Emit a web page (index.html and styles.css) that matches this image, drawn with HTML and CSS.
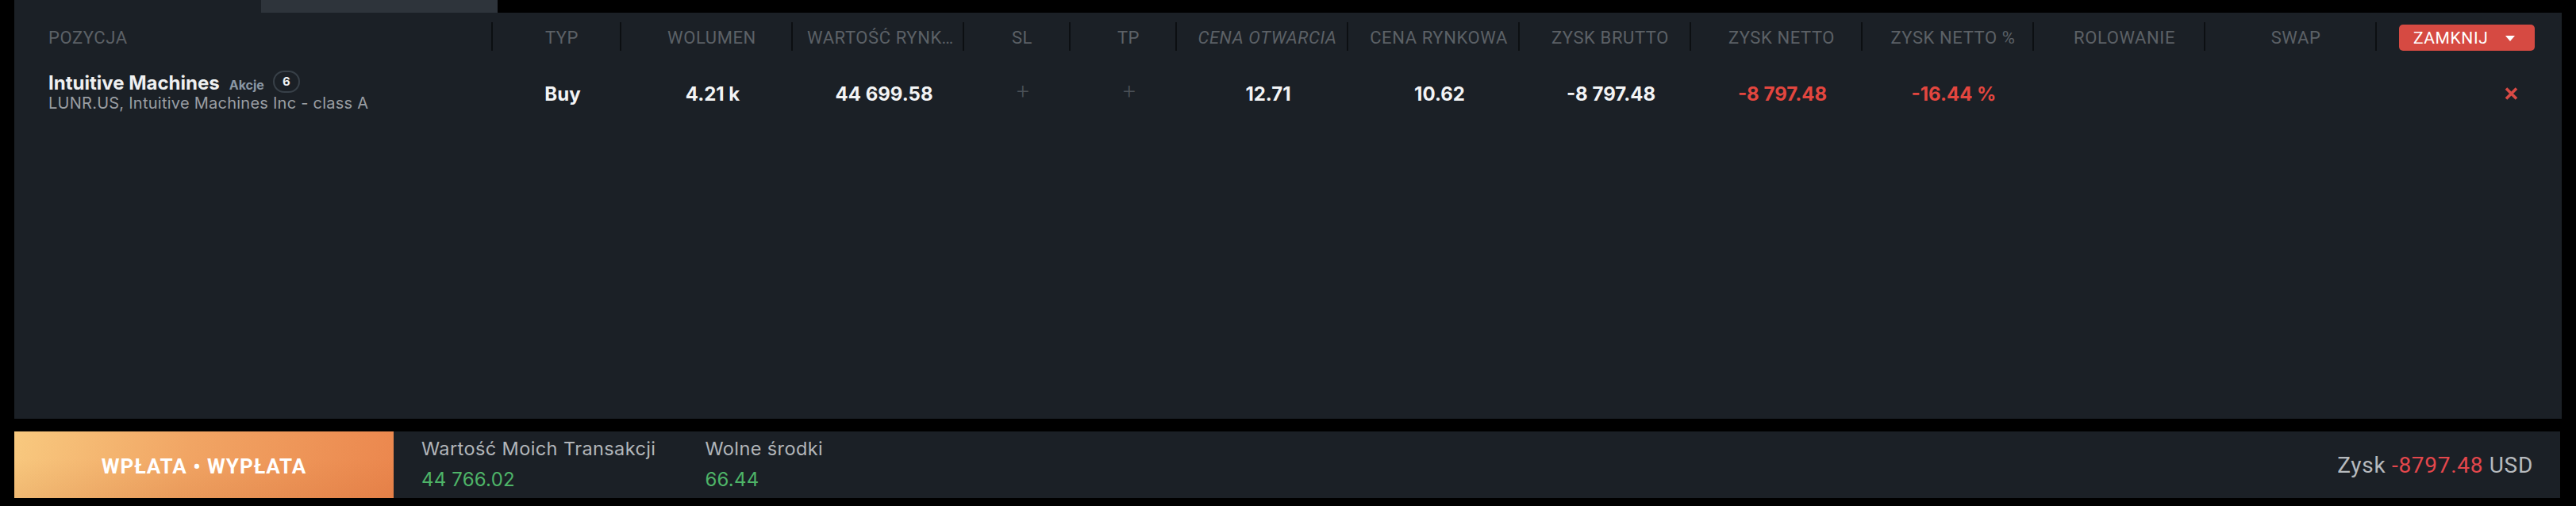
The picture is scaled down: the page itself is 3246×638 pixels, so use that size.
FILE: index.html
```html
<!DOCTYPE html>
<html lang="pl">
<head>
<meta charset="utf-8">
<title>Pozycje</title>
<link rel="stylesheet" href="styles.css">
</head>
<body>
<div class="app">
  <div class="tabs">
    <div class="tab tab-active"></div>
    <div class="tab tab-inactive"></div>
  </div>
  <div class="panel">
    <div class="grid thead">
      <div class="th th-first">POZYCJA</div>
      <div class="th">TYP</div>
      <div class="th">WOLUMEN</div>
      <div class="th"><span class="ell">WARTOŚĆ RYNKOWA</span></div>
      <div class="th">SL</div>
      <div class="th">TP</div>
      <div class="th th-italic">CENA OTWARCIA</div>
      <div class="th">CENA RYNKOWA</div>
      <div class="th">ZYSK BRUTTO</div>
      <div class="th">ZYSK NETTO</div>
      <div class="th">ZYSK NETTO %</div>
      <div class="th">ROLOWANIE</div>
      <div class="th">SWAP</div>
      <div class="th th-last">
        <button class="btn-close-all">ZAMKNIJ <span class="caret"></span></button>
      </div>
    </div>
    <div class="grid trow">
      <div class="td td-first">
        <div class="name-line">
          <span class="name">Intuitive Machines</span>
          <span class="kind">Akcje</span>
          <span class="badge">6</span>
        </div>
        <div class="sub">LUNR.US, Intuitive Machines Inc - class A</div>
      </div>
      <div class="td val">Buy</div>
      <div class="td val">4.21 k</div>
      <div class="td val">44 699.58</div>
      <div class="td plus">+</div>
      <div class="td plus">+</div>
      <div class="td val">12.71</div>
      <div class="td val">10.62</div>
      <div class="td val">-8 797.48</div>
      <div class="td val neg">-8 797.48</div>
      <div class="td val neg">-16.44 %</div>
      <div class="td"></div>
      <div class="td"></div>
      <div class="td td-last">
        <svg class="x-icon" width="17" height="16" viewBox="0 0 17 16"><path d="M2 1.5 L15 14.5 M15 1.5 L2 14.5" stroke="#d94a45" stroke-width="3.6" stroke-linecap="butt"/></svg>
      </div>
    </div>
  </div>
  <div class="footer">
    <div class="deposit">WPŁATA • WYPŁATA</div>
    <div class="stat">
      <div class="stat-label">Wartość Moich Transakcji</div>
      <div class="stat-value">44 766.02</div>
    </div>
    <div class="stat">
      <div class="stat-label">Wolne środki</div>
      <div class="stat-value">66.44</div>
    </div>
    <div class="profit">Zysk <span class="neg-soft">-8797.48</span> USD</div>
  </div>
</div>
</body>
</html>
```
FILE: styles.css
```css
html, body {
  margin: 0;
  padding: 0;
  background: #000;
}
body {
  font-family: "Roboto", "Liberation Sans", sans-serif;
  color: #f1f2f3;
  width: 3246px;
  height: 638px;
  overflow: hidden;
}
.app {
  padding: 0 18px;
}
.tabs {
  display: flex;
  height: 16px;
}
.tab-active {
  width: 311px;
  background: #1b2026;
}
.tab-inactive {
  width: 298px;
  background: #2e343b;
}
.panel {
  height: 512px;
  background: #1b2026;
  padding-top: 12px;
  box-sizing: border-box;
}
.grid {
  display: grid;
  grid-template-columns: 603px 162px 216px 216px 134px 134px 216px 216px 216px 216px 216px 216px 216px 232px;
}
.thead {
  height: 32px;
}
.th {
  display: flex;
  align-items: center;
  justify-content: center;
  padding: 3px 4px 0 18px;
  border-right: 2px solid #0c0f12;
  font-size: 22px;
  letter-spacing: 0.6px;
  color: #5c6166;
  white-space: nowrap;
  overflow: hidden;
  min-width: 0;
}
.th-first {
  justify-content: flex-start;
  padding-left: 43px;
}
.th-italic {
  font-style: italic;
}
.ell {
  overflow: hidden;
  text-overflow: ellipsis;
  white-space: nowrap;
  min-width: 0;
}
.th-last {
  border-right: none;
  justify-content: flex-start;
  align-items: flex-start;
  padding: 3px 0 0 28px;
  overflow: visible;
}
.btn-close-all {
  display: flex;
  align-items: center;
  height: 33px;
  width: 171px;
  box-sizing: border-box;
  padding: 0 0 0 18px;
  border: none;
  border-radius: 5px;
  background: #d64a42;
  color: #fff;
  font-family: "Roboto", sans-serif;
  font-size: 21px;
  letter-spacing: 0.6px;
}
.caret {
  margin-left: 22px;
  width: 0;
  height: 0;
  border-left: 6.5px solid transparent;
  border-right: 6.5px solid transparent;
  border-top: 7px solid #fff;
  margin-top: 2px;
}
.trow {
  margin-top: 31px;
}
.td {
  padding: 14px 4px 0 18px;
  display: flex;
  justify-content: center;
  font-size: 24px;
  line-height: 28px;
  white-space: nowrap;
}
.val {
  font-family: "Inter", "Roboto", sans-serif;
  font-weight: 700;
  color: #f3f4f5;
}
.neg {
  color: #e3463f;
}
.plus {
  padding-top: 11px;
  font-size: 28px;
  font-weight: 300;
  color: #4a5057;
}
.td-first {
  display: block;
  padding: 0 0 0 43px;
  font-family: "Inter", "Roboto", sans-serif;
}
.name-line {
  display: flex;
  align-items: center;
  height: 28px;
}
.name {
  font-size: 24px;
  font-weight: 700;
  color: #eff0f1;
}
.kind {
  margin-left: 12px;
  font-size: 16px;
  font-weight: 700;
  color: #8b97a3;
  padding-top: 3px;
}
.badge {
  margin-left: 11px;
  width: 34px;
  height: 28px;
  box-sizing: border-box;
  border: 2px solid #384048;
  border-radius: 14px;
  display: flex;
  align-items: center;
  justify-content: center;
  font-size: 15px;
  font-weight: 700;
  color: #eef0f2;
  margin-top: -4px;
}
.sub {
  font-size: 20px;
  line-height: 22px;
  letter-spacing: 0.25px;
  color: #9a9ea3;
}
.td-last {
  justify-content: flex-end;
  padding: 19px 54px 0 0;
}
.footer {
  margin-top: 16px;
  margin-right: 2px;
  height: 84px;
  display: flex;
  align-items: stretch;
  background: #1b2026;
}
.deposit {
  width: 478px;
  display: flex;
  align-items: center;
  justify-content: center;
  padding-top: 4px;
  box-sizing: border-box;
  background:
    linear-gradient(to bottom, rgba(255,255,255,0) 40%, rgba(170,70,20,0.10) 100%),
    linear-gradient(105deg, #f8c97f 0%, #f1a564 45%, #eb864d 100%);
  color: #fff;
  font-size: 26px;
  font-weight: 700;
  letter-spacing: 1px;
}
.stat {
  padding-top: 7px;
  margin-left: 35px;
  font-family: "Inter", "Roboto", sans-serif;
}
.stat + .stat {
  margin-left: 62px;
}
.stat-label {
  font-size: 23.5px;
  line-height: 30px;
  letter-spacing: 0.4px;
  color: #b2b6ba;
}
.stat-value {
  margin-top: 9px;
  font-size: 24px;
  line-height: 30px;
  letter-spacing: 0.2px;
  color: #4eb468;
}
.profit {
  margin-left: auto;
  padding-right: 34px;
  align-self: center;
  font-size: 28px;
  color: #b6babe;
  letter-spacing: 0.7px;
}
.neg-soft {
  color: #e4474c;
}
```
